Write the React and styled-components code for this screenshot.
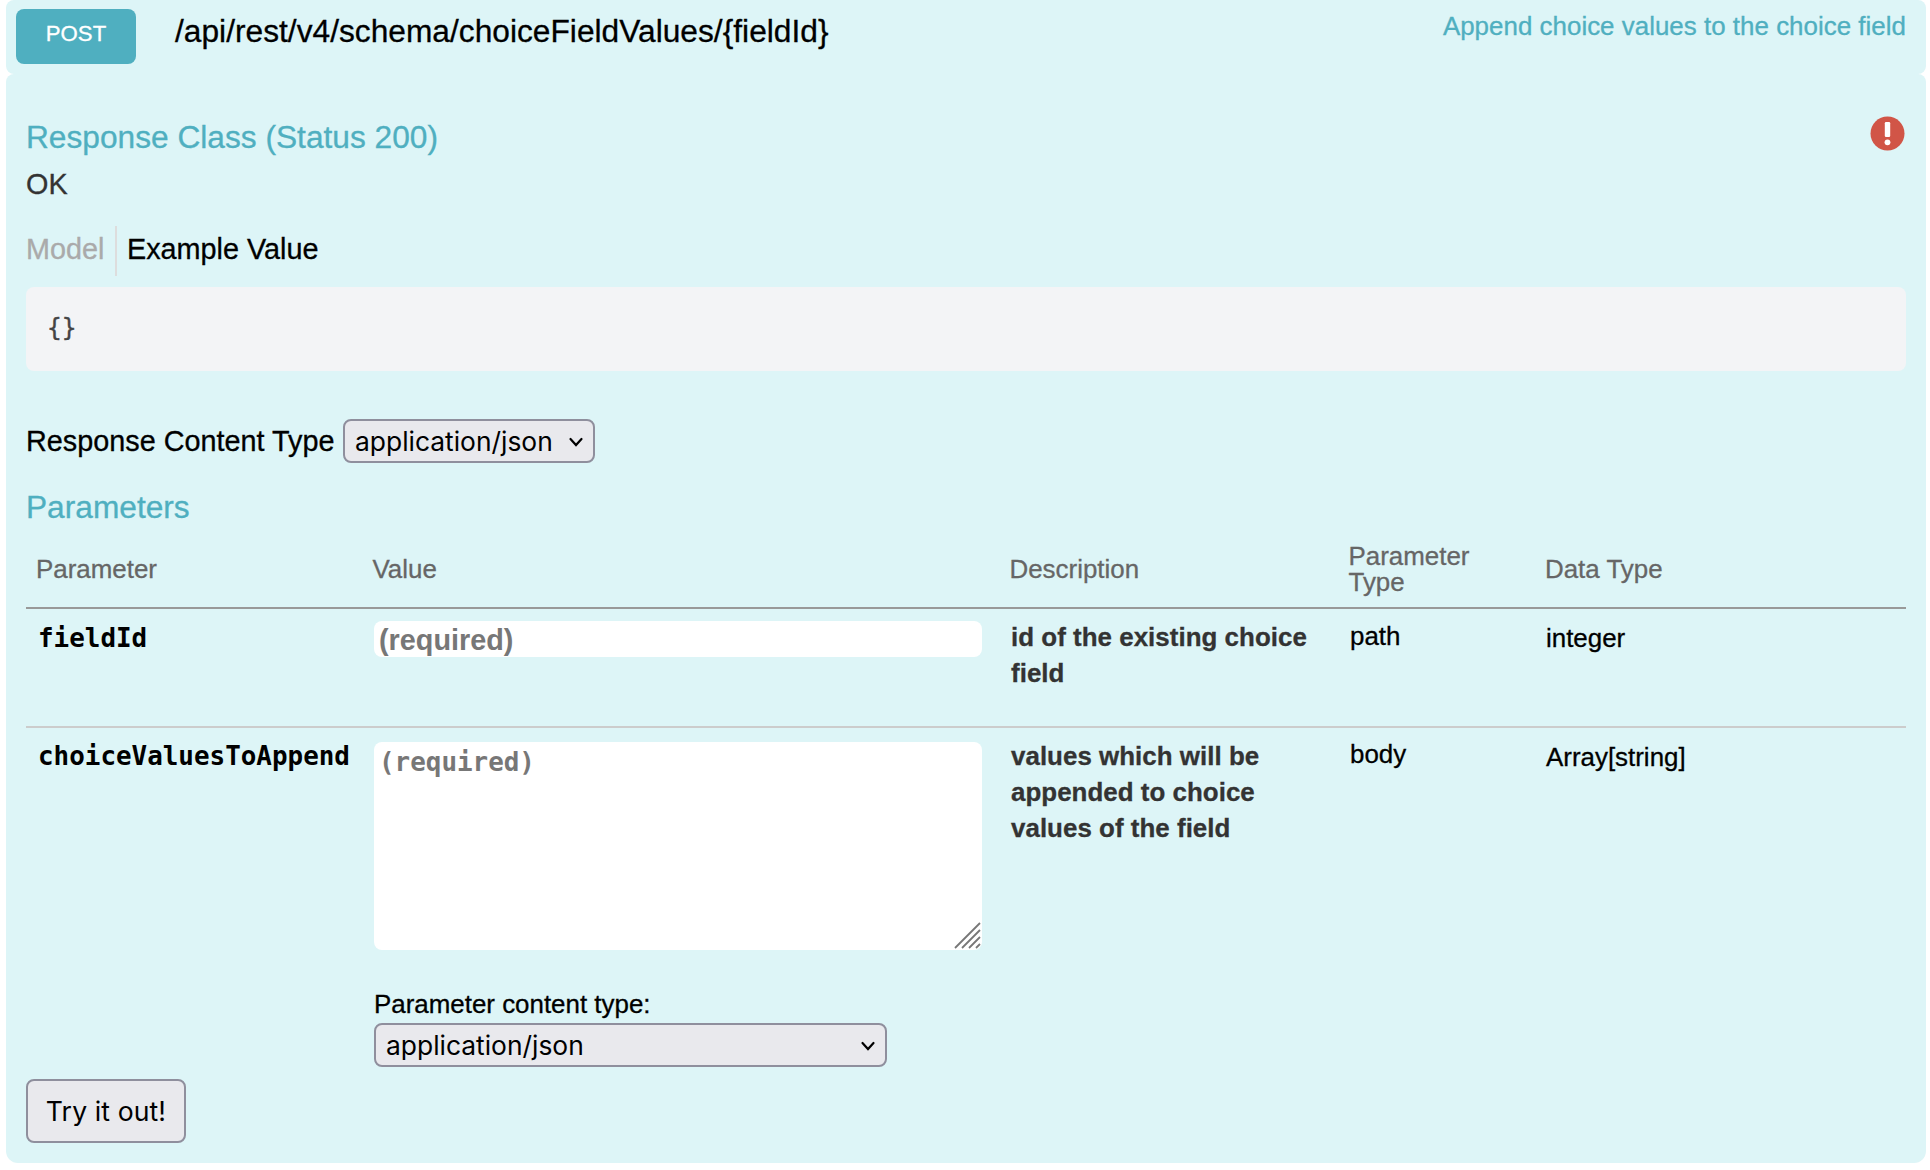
import React from 'react';
import styled, { createGlobalStyle } from 'styled-components';

const sans = '"Liberation Sans", Arial, Helvetica, sans-serif';
const mono = '"DejaVu Sans Mono", Menlo, monospace';
const system = 'Inter, system-ui, sans-serif';
const teal = '#4fafc0';

const GlobalStyle = createGlobalStyle`
  *, *::before, *::after { box-sizing: border-box; }
  body { margin: 0; background: #fff; font-family: ${sans}; color: #000; -webkit-text-stroke: 0.3px; }
`;

const Operation = styled.main`
  width: 1920px;
  margin-left: 6px;
  display: flex;
  flex-direction: column;
`;

const Heading = styled.header`
  height: 74px;
  padding: 9px 20px 0 10px;
  display: flex;
  align-items: flex-start;
  background: #ddf5f7;
  border-radius: 8px;
`;

const Method = styled.span`
  width: 120px;
  height: 55px;
  border-radius: 8px;
  background: ${teal};
  color: #fff;
  font-size: 22.18px;
  line-height: 50px;
  text-align: center;
`;

const Path = styled.span`
  margin-left: 39px;
  font-size: 31.68px;
  line-height: 44px;
  letter-spacing: 0.02px;
`;

const Summary = styled.span`
  margin-left: auto;
  color: ${teal};
  font-size: 25.92px;
  line-height: 34px;
  letter-spacing: 0.02px;
`;

const Content = styled.section`
  height: 1089px;
  padding: 45px 20px 0;
  background: #ddf5f7;
  border-radius: 8px 8px 12px 12px;
`;

const TitleRow = styled.div`
  display: flex;
  justify-content: space-between;
  align-items: flex-start;
  height: 36px;
`;

const Title = styled.h4`
  margin: ${(p) => p.$top || 0}px 0 0;
  color: ${teal};
  font-size: 31.68px;
  font-weight: 400;
  line-height: 36px;
`;

const AlertIcon = styled.svg`
  width: 36px;
  height: 36px;
  margin: -3px 0 0;
`;

const Status = styled.p`
  margin: 11px 0 24px;
  color: #333;
  font-size: 28.8px;
  line-height: 36px;
`;

const Tabs = styled.div`
  display: flex;
  height: 50px;
  font-size: 28.8px;
  line-height: 47px;
`;

const Tab = styled.span`
  color: ${(p) => (p.$active ? '#000' : '#aaa')};
  ${(p) => (p.$active ? 'padding-left: 10px;' : 'width: 91px; border-right: 2px solid #ddd;')}
`;

const Snippet = styled.pre`
  height: 84px;
  margin: 11px 0 48px;
  padding: 23px 21px;
  border-radius: 8px;
  background: #f3f4f6;
  color: #444;
  font-family: ${mono};
  font-size: 24.6px;
  line-height: 36px;
`;

const ResponseType = styled.div`
  display: flex;
  align-items: center;
  height: 44px;
  font-size: 28.8px;
`;

const ResponseLabel = styled.label`
  width: 317px;
  white-space: nowrap;
`;

const SelectBox = styled.div`
  position: relative;
  width: ${(p) => p.$width}px;
  height: 44px;
`;

const NativeSelect = styled.select`
  appearance: none;
  display: block;
  width: 100%;
  height: 100%;
  margin: 0;
  padding: 0 10px;
  border: 2px solid #8f8f9d;
  border-radius: 8px;
  background: #e9e9ed;
  color: #000;
  font-family: ${system};
  font-size: 26.4px;
  -webkit-text-stroke: 0;
`;

const Chevron = styled.svg`
  position: absolute;
  right: 11px;
  top: 17px;
  width: 16px;
  height: 12px;
  pointer-events: none;
`;

const Table = styled.table`
  width: 1880px;
  margin-top: 5px;
  table-layout: fixed;
  border-collapse: separate;
  border-spacing: 0;
`;

const Th = styled.th`
  width: ${(p) => p.$width}px;
  height: 79px;
  padding: 0 50px 0 ${(p) => p.$left || 10}px;
  border-bottom: 2px solid #999;
  color: #666;
  font-size: 25.92px;
  font-weight: 400;
  line-height: 26px;
  text-align: left;
  vertical-align: middle;
`;

const Row = styled.tr`
  height: ${(p) => p.$height}px;
  & > td { border-bottom: ${(p) => (p.$last ? '0' : '2px solid #ccc')}; }
`;

const Td = styled.td`
  padding: ${(p) => p.$top}px 12px 0;
  font-size: 25.92px;
  line-height: 36px;
  vertical-align: top;
`;

const NameCell = styled(Td)`
  font-family: ${mono};
  font-weight: 700;
  -webkit-text-stroke: 0;
`;

const ValueCell = styled(Td)`
  padding-left: 11px;
`;

const DescriptionCell = styled(Td)`
  color: #333;
  font-weight: 700;
  letter-spacing: 0.03px;
`;

const TextField = styled.input`
  display: block;
  width: 608px;
  height: 36px;
  padding: 2px 5px 0;
  border: 0;
  border-radius: 8px;
  background: #fff;
  font-family: ${sans};
  font-size: 28.8px;
  font-weight: 700;
  -webkit-text-stroke: 0;
  &::placeholder { color: #777; opacity: 1; }
`;

const AreaBox = styled.div`
  position: relative;
  width: 608px;
  height: 208px;
`;

const Area = styled.textarea`
  display: block;
  width: 100%;
  height: 100%;
  padding: 2px 5px;
  border: 0;
  border-radius: 8px;
  background: #fff;
  font-family: ${mono};
  font-size: 25.92px;
  font-weight: 700;
  line-height: 36px;
  resize: none;
  -webkit-text-stroke: 0;
  &::placeholder { color: #777; opacity: 1; }
`;

const Grip = styled.svg`
  position: absolute;
  right: 1px;
  bottom: 1px;
  width: 27px;
  height: 27px;
`;

const ContentTypeLabel = styled.label`
  display: block;
  margin: 36px 0 1px;
`;

const Submit = styled.button`
  display: block;
  width: 160px;
  height: 64px;
  padding: 0;
  border: 2px solid #8f8f9d;
  border-radius: 8px;
  background: #e9e9ed;
  color: #000;
  font-family: ${system};
  font-size: 26.6px;
  letter-spacing: 0.1px;
  -webkit-text-stroke: 0;
`;

function Select({ width }) {
  return (
    <SelectBox $width={width}>
      <NativeSelect defaultValue="application/json">
        <option>application/json</option>
      </NativeSelect>
      <Chevron viewBox="0 0 16 12" fill="none" stroke="#000" strokeWidth="2.2" strokeLinecap="round">
        <path d="M2.5 3 L8 9 L13.5 3" />
      </Chevron>
    </SelectBox>
  );
}

export default function App() {
  return (
    <>
      <GlobalStyle />
      <Operation>
        <Heading>
          <Method>POST</Method>
          <Path>/api/rest/v4/schema/choiceFieldValues/&#123;fieldId&#125;</Path>
          <Summary>Append choice values to the choice field</Summary>
        </Heading>
        <Content>
          <TitleRow>
            <Title>Response Class (Status 200)</Title>
            <AlertIcon viewBox="0 0 36 36">
              <circle cx="17.5" cy="17.5" r="17" fill="#d15547" />
              <rect x="14.8" y="6" width="5.4" height="15" rx="1.2" fill="#fff" />
              <circle cx="17.5" cy="26.3" r="2.9" fill="#fff" />
            </AlertIcon>
          </TitleRow>
          <Status>OK</Status>
          <Tabs>
            <Tab>Model</Tab>
            <Tab $active>Example Value</Tab>
          </Tabs>
          <Snippet>{'{}'}</Snippet>
          <ResponseType>
            <ResponseLabel>Response Content Type</ResponseLabel>
            <Select width={252} />
          </ResponseType>
          <Title $top={26}>Parameters</Title>
          <Table>
            <thead>
              <tr>
                <Th $width={337}>Parameter</Th>
                <Th $width={636} $left={9.5}>Value</Th>
                <Th $width={339} $left={10.5}>Description</Th>
                <Th $width={196} $left={10.5}>Parameter Type</Th>
                <Th $width={372} $left={11}>Data Type</Th>
              </tr>
            </thead>
            <tbody>
              <Row $height={119}>
                <NameCell $top={11}>fieldId</NameCell>
                <ValueCell $top={12}>
                  <TextField placeholder="(required)" />
                </ValueCell>
                <DescriptionCell $top={10}>id of the existing choice field</DescriptionCell>
                <Td $top={9}>path</Td>
                <Td $top={11}>integer</Td>
              </Row>
              <Row $height={351} $last>
                <NameCell $top={10}>choiceValuesToAppend</NameCell>
                <ValueCell $top={14}>
                  <AreaBox>
                    <Area placeholder="(required)" />
                    <Grip viewBox="0 0 27 27" fill="none" stroke="#777" strokeWidth="1.8">
                      <path d="M1 26 L26 1 M8 26 L26 8 M15 26 L26 15 M22 26 L26 22" />
                    </Grip>
                  </AreaBox>
                  <ContentTypeLabel>Parameter content type:</ContentTypeLabel>
                  <Select width={513} />
                </ValueCell>
                <DescriptionCell $top={10}>values which will be appended to choice values of the field</DescriptionCell>
                <Td $top={8}>body</Td>
                <Td $top={11}>Array[string]</Td>
              </Row>
            </tbody>
          </Table>
          <Submit type="button">Try it out!</Submit>
        </Content>
      </Operation>
    </>
  );
}
